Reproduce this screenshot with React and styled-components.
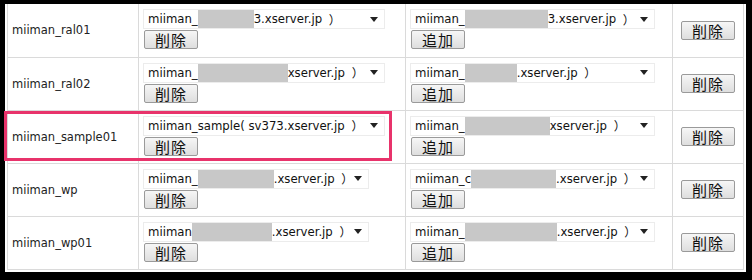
import React from "react";
import styled, { createGlobalStyle } from "styled-components";

const GlobalStyle = createGlobalStyle`
  html, body {
    margin: 0;
    padding: 0;
    background: #000;
  }
  body {
    font-family: "DejaVu Sans", "Noto Sans CJK JP", sans-serif;
  }
`;

const Frame = styled.div`
  position: relative;
  margin: 4px 6px 0 5px;
  height: 268px;
  background: #fff;
  padding-left: 2px;
  box-sizing: border-box;
`;

const Table = styled.table`
  border-collapse: collapse;
  table-layout: fixed;
  width: 736px;
  color: #222;
`;

const Row = styled.tr`
  height: 53px;
`;

const Cell = styled.td`
  border: 1px solid #dadada;
  border-top: ${(p) => (p.$first ? "none" : "1px solid #dadada")};
  padding: ${(p) => (p.$name ? "0 0 0 4px" : p.$center ? "0" : "5px 0 0 4px")};
  vertical-align: ${(p) => (p.$name || p.$center ? "middle" : "top")};
  text-align: ${(p) => (p.$center ? "center" : "left")};
  font-size: 11.5px;
  height: 53px;
  box-sizing: border-box;
`;

const Select = styled.div`
  display: flex;
  align-items: center;
  width: ${(p) => p.$w}px;
  height: 20px;
  border: 1px solid #ececec;
  background: #fff;
  box-sizing: border-box;
  padding-left: 4px;
  font-size: 11.7px;
  white-space: pre;
  overflow: hidden;
  color: #111;
`;

const Paren = styled.span`
  font-family: "Noto Sans CJK JP", sans-serif;
  font-size: 12px;
  margin-left: 3px;
`;

const Redact = styled.span`
  display: inline-block;
  width: ${(p) => p.$w}px;
  height: 20px;
  background: #c8c8c8;
  flex: none;
`;

const Arrow = styled.span`
  margin-left: auto;
  margin-right: 6px;
  width: 0;
  height: 0;
  border-left: 4px solid transparent;
  border-right: 4px solid transparent;
  border-top: 5px solid #222;
  flex: none;
`;

const Button = styled.button`
  display: block;
  width: 54px;
  height: 19px;
  margin: 1px 0 0 1px;
  padding: 0;
  border: 1px solid #9a9a9a;
  border-radius: 2px;
  background: linear-gradient(#f6f6f6, #dedede);
  font-family: "Noto Sans CJK JP", sans-serif;
  font-size: 15px;
  line-height: 17px;
  letter-spacing: 1px;
  color: #111;
  ${(p) => p.$inline && "display: inline-block; margin: 0;"}
`;

const Highlight = styled.div`
  position: absolute;
  left: -1px;
  top: 107px;
  width: 388px;
  height: 50px;
  border: 3px solid #e8336b;
  box-sizing: border-box;
  pointer-events: none;
`;

const rows = [
  {
    name: "miiman_ral01",
    a: { w: 242, pre: "miiman_", r: 56, post: "3.xserver.jp " },
    b: { w: 245, pre: "miiman_", r: 83, post: "3.xserver.jp " },
  },
  {
    name: "miiman_ral02",
    a: { w: 242, pre: "miiman_", r: 90, post: "xserver.jp " },
    b: { w: 245, pre: "miiman_", r: 52, post: ".xserver.jp " },
  },
  {
    name: "miiman_sample01",
    a: { w: 242, pre: "miiman_sample( sv373.xserver.jp ", r: 0, post: "" },
    b: { w: 245, pre: "miiman_", r: 85, post: "xserver.jp " },
  },
  {
    name: "miiman_wp",
    a: { w: 226, pre: "miiman_", r: 76, post: ".xserver.jp " },
    b: { w: 245, pre: "miiman_c", r: 85, post: ".xserver.jp " },
  },
  {
    name: "miiman_wp01",
    a: { w: 226, pre: "miiman", r: 80, post: ".xserver.jp " },
    b: { w: 245, pre: "miiman_", r: 92, post: ".xserver.jp " },
  },
];

const Choice = ({ opt }) => (
  <Select $w={opt.w}>
    <span>{opt.pre}</span>
    {opt.r > 0 && <Redact $w={opt.r} />}
    <span>{opt.post}</span>
    <Paren>）</Paren>
    <Arrow />
  </Select>
);

const App = () => (
  <>
    <GlobalStyle />
    <Frame>
      <Table>
        <colgroup>
          <col style={{ width: 131 }} />
          <col style={{ width: 267 }} />
          <col style={{ width: 267 }} />
          <col style={{ width: 71 }} />
        </colgroup>
        <tbody>
          {rows.map((r, i) => (
            <Row key={r.name}>
              <Cell $name $first={i === 0}>{r.name}</Cell>
              <Cell $first={i === 0}>
                <Choice opt={r.a} />
                <Button>削除</Button>
              </Cell>
              <Cell $first={i === 0}>
                <Choice opt={r.b} />
                <Button>追加</Button>
              </Cell>
              <Cell $center $first={i === 0}>
                <Button $inline>削除</Button>
              </Cell>
            </Row>
          ))}
        </tbody>
      </Table>
      <Highlight />
    </Frame>
  </>
);

export default App;
